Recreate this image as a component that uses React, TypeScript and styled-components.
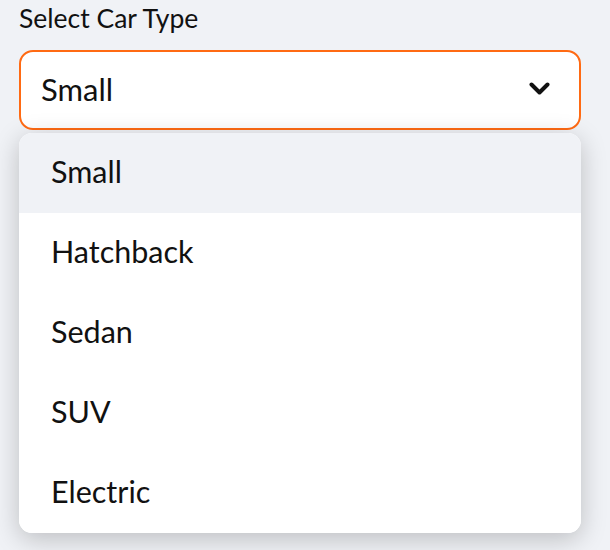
import React from "react";
import styled, { createGlobalStyle } from "styled-components";

const Global = createGlobalStyle`
  html, body { margin: 0; padding: 0; background: #f0f2f6; }
  body { font-family: "Lato", "Noto Sans", sans-serif; color: #111111; }
`;

const Page = styled.div`
  width: 610px;
  height: 550px;
  background: #f0f2f6;
  box-sizing: border-box;
  padding: 0 29px 0 19px;
  overflow: hidden;
`;

const Field = styled.div`
  position: relative;
  display: flex;
  flex-direction: column;
`;

const Label = styled.label`
  height: 38px;
  line-height: 36px;
  font-size: 26.5px;
  margin-bottom: 12px;
  color: #111111;
`;

const Control = styled.div`
  height: 80px;
  box-sizing: border-box;
  border: 2px solid #ff6a13;
  border-radius: 14px;
  background: #ffffff;
  display: flex;
  align-items: center;
  justify-content: space-between;
  padding: 0 29px 2px 20px;
`;

const Value = styled.span`
  font-size: 31px;
  color: #111111;
`;

const Menu = styled.ul`
  position: absolute;
  left: 0;
  right: 0;
  top: 133px;
  margin: 0;
  padding: 0;
  list-style: none;
  background: #ffffff;
  border-radius: 13px;
  overflow: hidden;
  box-shadow: 0 6px 26px rgba(0, 0, 0, 0.22);
  z-index: 2;
`;

const Option = styled.li<{ $active?: boolean }>`
  height: 80px;
  box-sizing: border-box;
  display: flex;
  align-items: center;
  padding: 0 32px 4px 32px;
  font-size: 30.5px;
  color: #111111;
  background: ${(p) => (p.$active ? "#f0f2f6" : "#ffffff")};
`;

const Chevron = () => (
  <svg width="21" height="14" viewBox="0 0 21 14" fill="none">
    <path
      d="M2.5 2.5 L10.5 10.5 L18.5 2.5"
      stroke="#111111"
      strokeWidth="4"
      strokeLinecap="round"
      strokeLinejoin="round"
    />
  </svg>
);

const options = ["Small", "Hatchback", "Sedan", "SUV", "Electric"];

export default function App() {
  return (
    <>
      <Global />
      <Page>
        <Field>
          <Label>Select Car Type</Label>
          <Control>
            <Value>Small</Value>
            <Chevron />
          </Control>
          <Menu>
            {options.map((o, i) => (
              <Option key={o} $active={i === 0}>
                {o}
              </Option>
            ))}
          </Menu>
        </Field>
      </Page>
    </>
  );
}
